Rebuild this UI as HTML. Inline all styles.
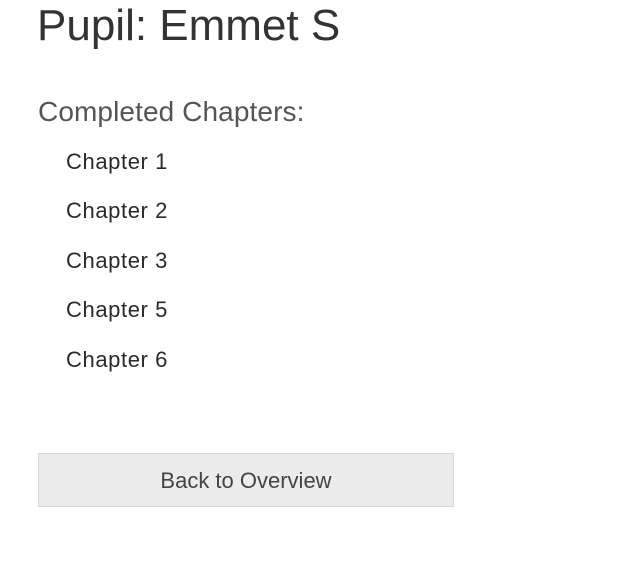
<!DOCTYPE html>
<html><head><style>
body{margin:0;width:619px;height:579px;background:#fff;font-family:"Liberation Sans",sans-serif;color:#333;position:relative;overflow:hidden}
.a{position:absolute;white-space:nowrap;line-height:1}
#t{left:37px;top:4px;font-size:44px;color:#333}
#c{left:38px;top:98px;font-size:28px;color:#555;letter-spacing:0.1px}
.ch{left:66px;font-size:22px;color:#2a2a2a;letter-spacing:0.6px}
#b{position:absolute;left:38px;top:453px;width:414px;height:52px;background:#ececec;border:1px solid #d9d9d9;font-size:22px;color:#444;text-align:center;line-height:54px}
</style></head><body>
<div class="a" id="t">Pupil: Emmet S</div>
<div class="a" id="c">Completed Chapters:</div>
<div class="a ch" style="top:151px">Chapter 1</div>
<div class="a ch" style="top:200px">Chapter 2</div>
<div class="a ch" style="top:250px">Chapter 3</div>
<div class="a ch" style="top:299px">Chapter 5</div>
<div class="a ch" style="top:349px">Chapter 6</div>
<div id="b">Back to Overview</div>
</body></html>
